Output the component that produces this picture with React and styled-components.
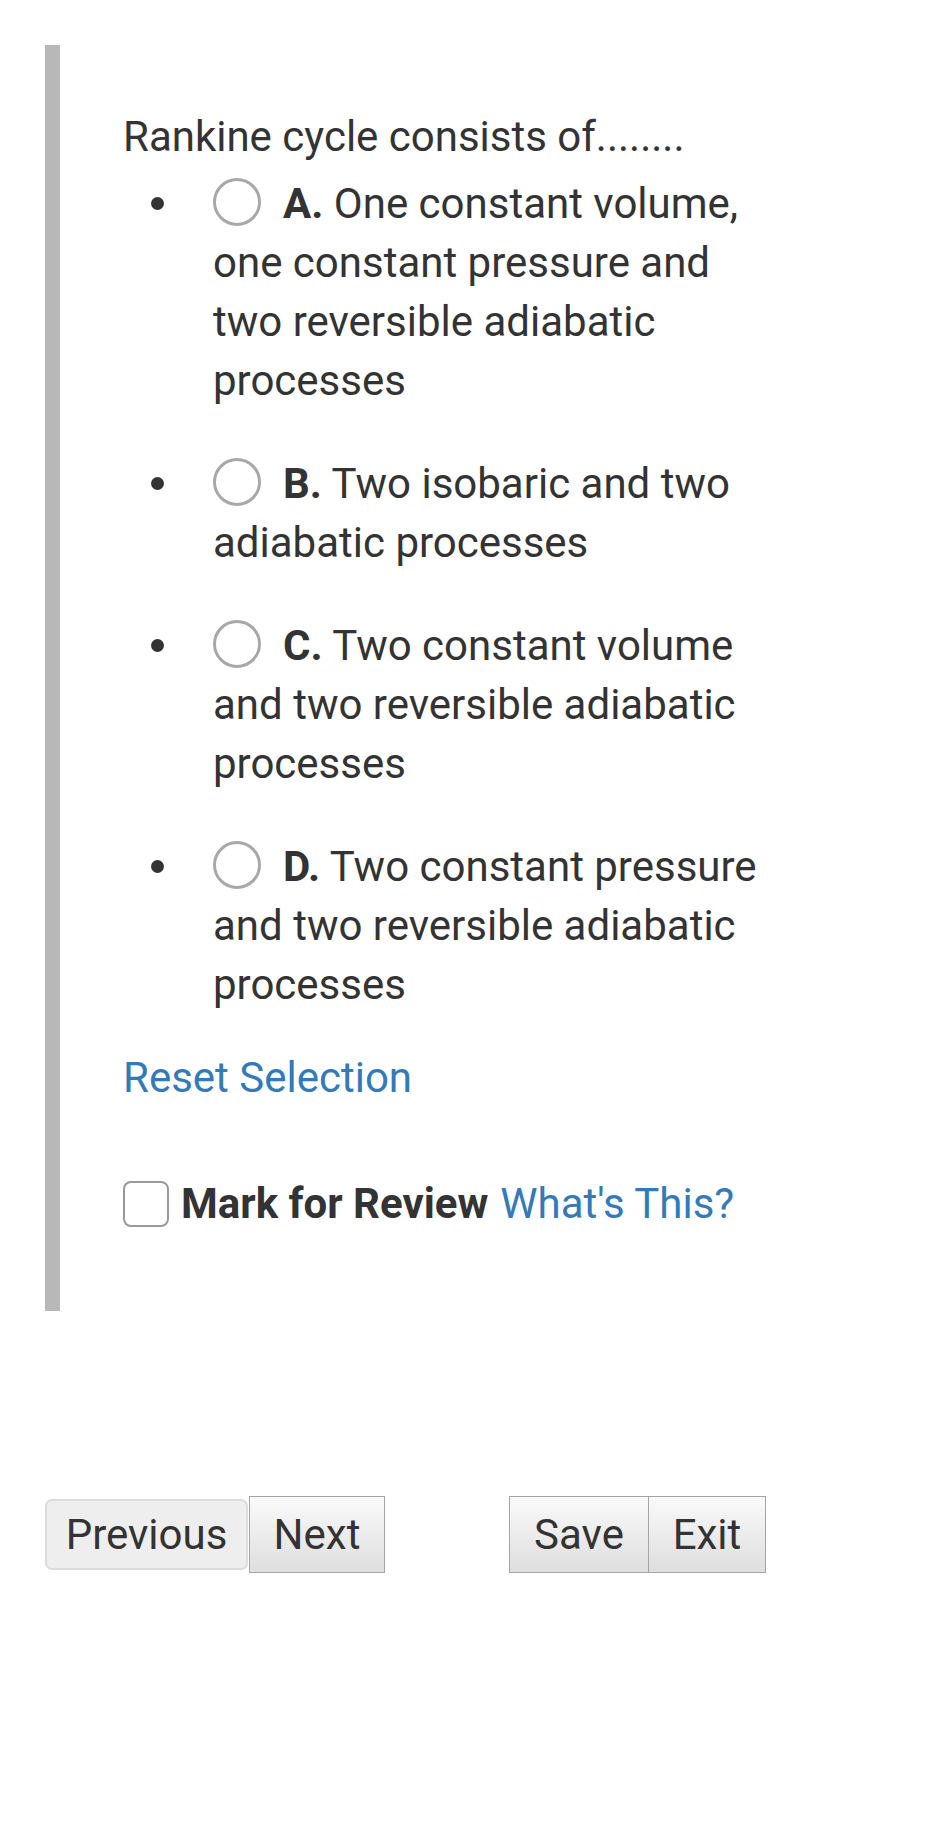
import React from "react";
import styled, { createGlobalStyle } from "styled-components";

const GlobalStyle = createGlobalStyle`
  html, body {
    margin: 0;
    padding: 0;
    background: #fff;
  }
  body {
    font-family: Roboto, "Liberation Sans", Arial, sans-serif;
    color: #333;
    font-size: 42px;
    line-height: 59px;
  }
`;

const Page = styled.div`
  padding: 45px 0 0 45px;
  min-height: 1824px;
  box-sizing: border-box;
`;

const QuestionPanel = styled.div`
  width: 720px;
  border-left: 15px solid #b8b8b8;
  padding: 62px 0 78px 63px;
`;

const Prompt = styled.div``;

const Options = styled.ul`
  list-style: none;
  margin: 8px 0 0;
  padding: 0 0 0 90px;
  width: 560px;
`;

const Option = styled.li`
  position: relative;
  margin-bottom: 44px;

  &::before {
    content: "";
    position: absolute;
    left: -62px;
    top: 23px;
    width: 13px;
    height: 13px;
    border-radius: 50%;
    background: #333;
  }
`;

const Radio = styled.span`
  display: inline-block;
  width: 42px;
  height: 42px;
  border: 3px solid #a8a8a8;
  border-radius: 50%;
  vertical-align: -8px;
  margin-right: 22px;
`;

const Letter = styled.b`
  font-weight: 700;
`;

const Link = styled.a`
  color: #337ab7;
  text-decoration: none;
  cursor: pointer;
`;

const ResetRow = styled.div`
  margin-top: -10px;
`;

const ReviewRow = styled.div`
  margin-top: 67px;
  display: flex;
  align-items: center;
`;

const Checkbox = styled.span`
  display: inline-block;
  width: 42px;
  height: 42px;
  border: 2.5px solid #999;
  border-radius: 8px;
  margin-right: 12px;
`;

const ReviewLabel = styled.b`
  font-weight: 700;
  margin-right: 12px;
`;

const ButtonBar = styled.div`
  display: flex;
  align-items: center;
  margin-top: 185px;
`;

const Group = styled.div`
  display: flex;
  align-items: center;
  margin-right: ${(p) => p.$gap || 0}px;
`;

const Button = styled.button`
  font-family: Roboto, "Liberation Sans", Arial, sans-serif;
  font-size: 42px;
  color: #333;
  height: 77px;
  width: ${(p) => p.$w}px;
  padding: 0;
  border: 1px solid #a5a5a5;
  border-radius: 0;
  background: linear-gradient(#fafafa, #dedede);
  margin-left: ${(p) => (p.$joined ? -1 : 0)}px;
`;

const FlatButton = styled(Button)`
  height: 71px;
  border: 2px solid #dcdcdc;
  border-radius: 7px;
  background: #eeeeee;
  margin-right: 1px;
`;

const options = [
  { letter: "A.", text: "One constant volume, one constant pressure and two reversible adiabatic processes" },
  { letter: "B.", text: "Two isobaric and two adiabatic processes" },
  { letter: "C.", text: "Two constant volume and two reversible adiabatic processes" },
  { letter: "D.", text: "Two constant pressure and two reversible adiabatic processes" },
];

export default function App() {
  return (
    <>
      <GlobalStyle />
      <Page>
        <QuestionPanel>
          <Prompt>Rankine cycle consists of........</Prompt>
          <Options>
            {options.map((o) => (
              <Option key={o.letter}>
                <Radio />
                <span>
                  <Letter>{o.letter}</Letter> {o.text}
                </span>
              </Option>
            ))}
          </Options>
          <ResetRow>
            <Link>Reset Selection</Link>
          </ResetRow>
          <ReviewRow>
            <Checkbox />
            <ReviewLabel>Mark for Review</ReviewLabel>
            <Link>What's This?</Link>
          </ReviewRow>
        </QuestionPanel>
        <ButtonBar>
          <Group $gap={124}>
            <FlatButton $w={203}>Previous</FlatButton>
            <Button $w={136}>Next</Button>
          </Group>
          <Group>
            <Button $w={140}>Save</Button>
            <Button $w={118} $joined>Exit</Button>
          </Group>
        </ButtonBar>
      </Page>
    </>
  );
}
